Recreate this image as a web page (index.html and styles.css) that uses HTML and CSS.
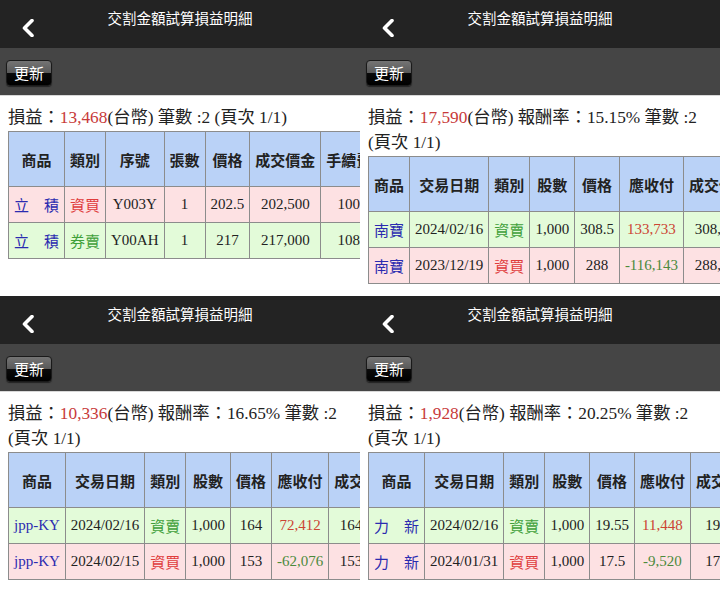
FILE: index.html
```html
<!DOCTYPE html>
<html lang="zh-Hant">
<head>
    <meta charset="utf-8" />
    <title>交割金額試算損益明細</title>
    <link rel="stylesheet" href="styles.css">
</head>
<body>
    <div class="screens">

        <!-- 1 -->
        <div class="screen">
            <div class="topbar">
                <span class="back"><svg width="12" height="18" viewBox="0 0 12 18"><polyline points="10,1.5 2.5,9 10,16.5" /></svg></span>
                <div class="title">交割金額試算損益明細</div>
            </div>
            <div class="toolbar"><button class="btn-refresh">更新</button></div>
            <div class="summary">損益：<span class="profit">13,468</span>(台幣) 筆數 :2 <span class="page">(頁次 1/1)</span></div>
            <table class="detail">
                <tr>
                    <th>商品</th><th>類別</th><th>序號</th><th>張數</th><th>價格</th><th>成交價金</th><th>手續費</th><th>交易稅</th>
                </tr>
                <tr class="row-buy">
                    <td class="name name-wide">立　積</td><td class="buy">資買</td><td>Y003Y</td><td>1</td><td>202.5</td><td>202,500</td><td>100</td><td>0</td>
                </tr>
                <tr class="row-sell">
                    <td class="name name-wide">立　積</td><td class="sell">券賣</td><td>Y00AH</td><td>1</td><td>217</td><td>217,000</td><td>108</td><td>651</td>
                </tr>
            </table>
        </div>

        <!-- 2 -->
        <div class="screen">
            <div class="topbar">
                <span class="back"><svg width="12" height="18" viewBox="0 0 12 18"><polyline points="10,1.5 2.5,9 10,16.5" /></svg></span>
                <div class="title">交割金額試算損益明細</div>
            </div>
            <div class="toolbar"><button class="btn-refresh">更新</button></div>
            <div class="summary">損益：<span class="profit">17,590</span>(台幣) 報酬率：15.15% 筆數 :2 <span class="page">(頁次 1/1)</span></div>
            <table class="detail">
                <tr>
                    <th>商品</th><th>交易日期</th><th>類別</th><th>股數</th><th>價格</th><th>應收付</th><th>成交價金</th><th>手續費</th>
                </tr>
                <tr class="row-sell">
                    <td class="name">南寶</td><td>2024/02/16</td><td class="sell">資賣</td><td>1,000</td><td>308.5</td><td class="plus">133,733</td><td>308,500</td><td>439</td>
                </tr>
                <tr class="row-buy">
                    <td class="name">南寶</td><td>2023/12/19</td><td class="buy">資買</td><td>1,000</td><td>288</td><td class="minus">-116,143</td><td>288,000</td><td>410</td>
                </tr>
            </table>
        </div>

        <!-- 3 -->
        <div class="screen">
            <div class="topbar">
                <span class="back"><svg width="12" height="18" viewBox="0 0 12 18"><polyline points="10,1.5 2.5,9 10,16.5" /></svg></span>
                <div class="title">交割金額試算損益明細</div>
            </div>
            <div class="toolbar"><button class="btn-refresh">更新</button></div>
            <div class="summary">損益：<span class="profit">10,336</span>(台幣) 報酬率：16.65% 筆數 :2 <span class="page">(頁次 1/1)</span></div>
            <table class="detail">
                <tr>
                    <th>商品</th><th>交易日期</th><th>類別</th><th>股數</th><th>價格</th><th>應收付</th><th>成交價金</th><th>手續費</th>
                </tr>
                <tr class="row-sell">
                    <td class="name">jpp-KY</td><td>2024/02/16</td><td class="sell">資賣</td><td>1,000</td><td>164</td><td class="plus">72,412</td><td>164,000</td><td>233</td>
                </tr>
                <tr class="row-buy">
                    <td class="name">jpp-KY</td><td>2024/02/15</td><td class="buy">資買</td><td>1,000</td><td>153</td><td class="minus">-62,076</td><td>153,000</td><td>218</td>
                </tr>
            </table>
        </div>

        <!-- 4 -->
        <div class="screen">
            <div class="topbar">
                <span class="back"><svg width="12" height="18" viewBox="0 0 12 18"><polyline points="10,1.5 2.5,9 10,16.5" /></svg></span>
                <div class="title">交割金額試算損益明細</div>
            </div>
            <div class="toolbar"><button class="btn-refresh">更新</button></div>
            <div class="summary">損益：<span class="profit">1,928</span>(台幣) 報酬率：20.25% 筆數 :2 <span class="page">(頁次 1/1)</span></div>
            <table class="detail">
                <tr>
                    <th>商品</th><th>交易日期</th><th>類別</th><th>股數</th><th>價格</th><th>應收付</th><th>成交價金</th><th>手續費</th>
                </tr>
                <tr class="row-sell">
                    <td class="name name-wide">力　新</td><td>2024/02/16</td><td class="sell">資賣</td><td>1,000</td><td>19.55</td><td class="plus">11,448</td><td>19,550</td><td>27</td>
                </tr>
                <tr class="row-buy">
                    <td class="name name-wide">力　新</td><td>2024/01/31</td><td class="buy">資買</td><td>1,000</td><td>17.5</td><td class="minus">-9,520</td><td>17,500</td><td>24</td>
                </tr>
            </table>
        </div>

    </div>
</body>
</html>
```

FILE: styles.css
```css
body {
    margin: 0;
    background-color: #ffffff;
    font-family: "Liberation Serif", "Noto Sans CJK TC", serif;
    color: #222;
}

.screens {
    display: grid;
    grid-template-columns: 360px 360px;
    grid-template-rows: 296px 305px;
}

.screen {
    overflow: hidden;
    background-color: #fff;
}

.topbar {
    height: 48px;
    background-color: #232323;
    display: grid;
    grid-template-columns: 1fr auto 1fr;
    align-items: start;
}

.back {
    grid-column: 1;
    grid-row: 1;
    margin: 19px 0 0 22px;
    line-height: 0;
}

.back polyline {
    fill: none;
    stroke: #fff;
    stroke-width: 3.6;
    stroke-linecap: round;
    stroke-linejoin: round;
}

.title {
    grid-column: 2;
    grid-row: 1;
    padding-top: 7px;
    font-family: "Noto Sans CJK TC", sans-serif;
    font-size: 14.5px;
    line-height: 22px;
    color: #fff;
}

.toolbar {
    height: 48px;
    background-color: #454545;
    border-bottom: 1px solid #d8d8d8;
    padding: 12px 0 0 6px;
    box-sizing: border-box;
}

.btn-refresh {
    width: 46px;
    height: 26px;
    padding: 0;
    border: 1px solid #1a1a1a;
    border-radius: 4px;
    background: linear-gradient(#747474 0%, #5a5a5a 48%, #0a0a0a 52%, #000 100%);
    color: #fff;
    font-family: "Noto Sans CJK TC", sans-serif;
    font-size: 15px;
    line-height: 22px;
    box-shadow: 0 1px 1px rgba(0, 0, 0, 0.5);
}

.summary {
    padding: 9px 8px 0 8px;
    font-size: 17.3px;
    line-height: 25px;
    color: #222;
}

.page {
    white-space: nowrap;
}

.profit {
    color: #c83a3a;
}

.detail {
    margin: 1px 0 0 8px;
    border-collapse: collapse;
    font-size: 15px;
    white-space: nowrap;
}

.detail th,
.detail td {
    border: 1px solid #8c8c8c;
    padding: 0 5px;
    text-align: center;
}

.detail th {
    height: 54px;
    background-color: #bad2f7;
    font-family: "Noto Sans CJK TC", sans-serif;
    font-weight: bold;
    color: #222;
}

.detail td {
    height: 35px;
}

.row-buy {
    background-color: #fde1e3;
}

.row-sell {
    background-color: #e3fbd9;
}

.name {
    color: #2b2bb0;
}

.name-wide {
    text-align-last: justify;
}

.buy {
    color: #e03c3c;
}

.sell {
    color: #3fa03a;
}

.plus {
    color: #cc4433;
}

.minus {
    color: #4c8a3c;
}
```
